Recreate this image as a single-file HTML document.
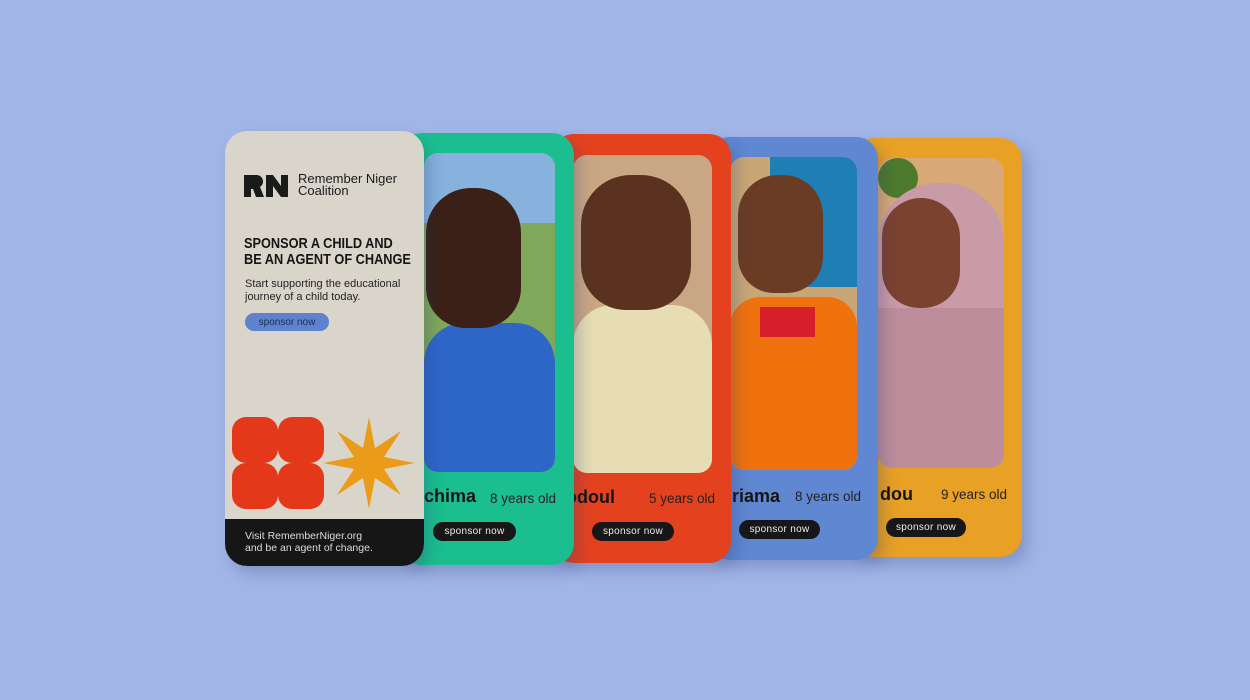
<!DOCTYPE html>
<html><head><meta charset="utf-8"><style>
*{margin:0;padding:0;box-sizing:border-box}
body{width:1250px;height:700px;background:#a2b5e7;position:relative;overflow:hidden;font-family:"Liberation Sans",sans-serif}
.c{position:absolute;border-radius:22px;box-shadow:6px 8px 14px rgba(40,60,120,.25)}
.ph{position:absolute;border-radius:14px;overflow:hidden}
.nm{position:absolute;font-weight:bold;font-size:18px;color:#151515}
.ag{position:absolute;font-size:13.5px;color:#222}
.bt{position:absolute;background:#171717;color:#eee;font-size:10px;border-radius:10px;height:19px;display:flex;align-items:center;justify-content:center;letter-spacing:.3px}
.abs{position:absolute}
</style></head><body>

<!-- yellow -->
<div class="c" style="left:852px;top:138px;width:170px;height:419px;background:#e8a025"></div>
<div class="ph" style="left:878px;top:158px;width:126px;height:310px;background:#d8a876">
 <div class="abs" style="left:0;top:0;width:40px;height:40px;background:#4d7a2c;border-radius:50%"></div>
 <div class="abs" style="left:0;top:25px;width:126px;height:290px;background:#c99aa8;border-radius:60px 60px 0 0"></div>
 <div class="abs" style="left:4px;top:40px;width:78px;height:110px;background:#7b4230;border-radius:40px 40px 38px 38px"></div>
 <div class="abs" style="left:0;top:150px;width:126px;height:160px;background:#b88796;opacity:.7"></div>
</div>
<div class="nm" style="left:880px;top:484px">dou</div>
<div class="ag" style="left:941px;top:487px">9 years old</div>
<div class="bt" style="left:886px;top:518px;width:80px">sponsor now</div>

<!-- blue -->
<div class="c" style="left:708px;top:137px;width:170px;height:423px;background:#5f87d2"></div>
<div class="ph" style="left:730px;top:157px;width:127px;height:313px;background:#c8a676">
 <div class="abs" style="left:40px;top:0;width:87px;height:130px;background:#1e7fb5"></div>
 <div class="abs" style="left:0;top:140px;width:127px;height:180px;background:#f0720e;border-radius:30px 30px 0 0"></div>
 <div class="abs" style="left:30px;top:150px;width:55px;height:30px;background:#d8202c"></div>
 <div class="abs" style="left:8px;top:18px;width:85px;height:118px;background:#6b3c24;border-radius:40px 40px 36px 36px"></div>
</div>
<div class="nm" style="left:732px;top:486px">riama</div>
<div class="ag" style="left:795px;top:489px">8 years old</div>
<div class="bt" style="left:739px;top:520px;width:81px">sponsor now</div>

<!-- red -->
<div class="c" style="left:552px;top:134px;width:179px;height:429px;background:#e4421f"></div>
<div class="ph" style="left:573px;top:155px;width:139px;height:318px;background:#c9a784">
 <div class="abs" style="left:0;top:150px;width:139px;height:170px;background:#e6ddb5;border-radius:40px 40px 0 0"></div>
 <div class="abs" style="left:8px;top:20px;width:110px;height:135px;background:#5a321f;border-radius:50px 50px 45px 45px"></div>
</div>
<div class="nm" style="left:566px;top:487px">odoul</div>
<div class="ag" style="left:649px;top:491px">5 years old</div>
<div class="bt" style="left:592px;top:522px;width:82px">sponsor now</div>

<!-- green -->
<div class="c" style="left:400px;top:133px;width:174px;height:432px;background:#1bbf8f"></div>
<div class="ph" style="left:424px;top:153px;width:131px;height:319px;background:#7fa85a">
 <div class="abs" style="left:0;top:0;width:131px;height:70px;background:#86b2dd"></div>
 <div class="abs" style="left:0;top:170px;width:131px;height:150px;background:#2e66c8;border-radius:40px 40px 0 0"></div>
 <div class="abs" style="left:2px;top:35px;width:95px;height:140px;background:#3a2016;border-radius:45px 45px 40px 40px"></div>
</div>
<div class="nm" style="left:424px;top:486px">chima</div>
<div class="ag" style="left:490px;top:491px">8 years old</div>
<div class="bt" style="left:433px;top:522px;width:83px">sponsor now</div>

<!-- beige -->
<div class="c" style="left:225px;top:131px;width:199px;height:435px;background:#d9d5cb;overflow:hidden">
 <svg class="abs" style="left:19px;top:43px" width="48" height="24" viewBox="0 0 48 24">
  <path d="M0 1h13a6.5 6.5 0 0 1 3 12L20 23h-8l-3-8H7v8H0z" fill="#1a1a1a"/>
  <path d="M22 1h7l8 11V1h7v22h-7l-8-11v11h-7z" fill="#1a1a1a"/>
 </svg>
 <div class="abs" style="left:73px;top:42px;font-size:13px;line-height:12px;color:#1a1a1a;white-space:nowrap">Remember Niger<br>Coalition</div>
 <div class="abs" style="left:19px;top:105px;font-size:15px;font-weight:bold;line-height:16px;color:#151515;white-space:nowrap;transform:scaleX(.85);transform-origin:left top">SPONSOR A CHILD AND<br>BE AN AGENT OF CHANGE</div>
 <div class="abs" style="left:20px;top:147px;font-size:11px;line-height:13px;color:#222;white-space:nowrap">Start supporting the educational<br>journey of a child today.</div>
 <div class="abs" style="left:20px;top:182px;width:84px;height:18px;border-radius:9px;background:#5f82cf;color:#1e2c55;font-size:10px;display:flex;align-items:center;justify-content:center">sponsor now</div>
 <div class="abs" style="left:7px;top:286px;width:46px;height:46px;background:#e3391a;border-radius:14px"></div>
 <div class="abs" style="left:53px;top:286px;width:46px;height:46px;background:#e3391a;border-radius:14px"></div>
 <div class="abs" style="left:7px;top:332px;width:46px;height:46px;background:#e3391a;border-radius:14px"></div>
 <div class="abs" style="left:53px;top:332px;width:46px;height:46px;background:#e3391a;border-radius:14px"></div>
 <svg class="abs" style="left:98px;top:286px" width="92" height="92" viewBox="-46 -46 92 92">
  <polygon fill="#eb9b1a" points="0,-46 6,-15 32,-32 15,-6 46,0 15,6 32,32 6,15 0,46 -6,15 -32,32 -15,6 -46,0 -15,-6 -32,-32 -6,-15"/>
 </svg>
 <div class="abs" style="left:0;top:388px;width:199px;height:47px;background:#161616"></div>
 <div class="abs" style="left:20px;top:399px;font-size:10.5px;line-height:12px;color:#ddd">Visit RememberNiger.org<br>and be an agent of change.</div>
</div>
</body></html>
